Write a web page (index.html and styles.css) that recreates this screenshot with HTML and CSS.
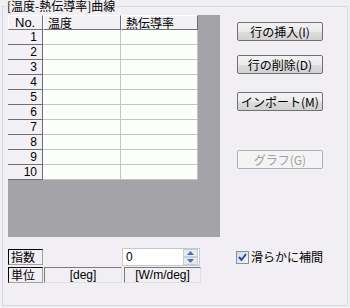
FILE: index.html
```html
<!DOCTYPE html>
<html lang="ja">
<head>
<meta charset="utf-8">
<link rel="stylesheet" href="styles.css">
</head>
<body>
<fieldset class="group">
  <legend class="group-title">[温度-熱伝導率]曲線</legend>
  <div class="content">
    <div class="left">
      <div class="grid-area">
        <div class="table">
          <div class="row head">
            <div class="c rh">No.</div>
            <div class="c c1">温度</div>
            <div class="c c2">熱伝導率</div>
          </div>
          <div class="row"><div class="c rh">1</div><div class="c c1"></div><div class="c c2"></div></div>
          <div class="row"><div class="c rh">2</div><div class="c c1"></div><div class="c c2"></div></div>
          <div class="row"><div class="c rh">3</div><div class="c c1"></div><div class="c c2"></div></div>
          <div class="row"><div class="c rh">4</div><div class="c c1"></div><div class="c c2"></div></div>
          <div class="row"><div class="c rh">5</div><div class="c c1"></div><div class="c c2"></div></div>
          <div class="row"><div class="c rh">6</div><div class="c c1"></div><div class="c c2"></div></div>
          <div class="row"><div class="c rh">7</div><div class="c c1"></div><div class="c c2"></div></div>
          <div class="row"><div class="c rh">8</div><div class="c c1"></div><div class="c c2"></div></div>
          <div class="row"><div class="c rh">9</div><div class="c c1"></div><div class="c c2"></div></div>
          <div class="row"><div class="c rh">10</div><div class="c c1"></div><div class="c c2"></div></div>
        </div>
      </div>
      <div class="foot">
        <div class="frow">
          <div class="flabel">指数</div>
          <div class="fblank"></div>
          <div class="spin">
            <span class="spin-val">0</span>
            <span class="spin-btns">
              <span class="sb"><svg width="7" height="4" viewBox="0 0 7 4"><path d="M3.5 0 L7 4 L0 4 Z" fill="#4a6fb5"/></svg></span>
              <span class="sb"><svg width="7" height="4" viewBox="0 0 7 4"><path d="M0 0 L7 0 L3.5 4 Z" fill="#4a6fb5"/></svg></span>
            </span>
          </div>
        </div>
        <div class="frow">
          <div class="flabel">単位</div>
          <div class="unit u1">[deg]</div>
          <div class="unit u2">[W/m/deg]</div>
        </div>
      </div>
    </div>
    <div class="right">
      <button class="btn b1">行の挿入(I)</button>
      <button class="btn b2">行の削除(D)</button>
      <button class="btn b3">インポート(M)</button>
      <button class="btn b4" disabled>グラフ(G)</button>
      <label class="check">
        <span class="box"><svg width="11" height="11" viewBox="0 0 11 11"><path d="M2 5 L4.5 8 L9 2" fill="none" stroke="#2a4a9a" stroke-width="2"/></svg></span>
        <span class="check-text">滑らかに補間</span>
      </label>
    </div>
  </div>
</fieldset>
</body>
</html>
```

FILE: styles.css
```css
* { box-sizing: border-box; }
html, body { margin: 0; padding: 0; }
body {
  width: 350px;
  height: 308px;
  background: #f1eff3;
  font-family: "Noto Sans CJK JP", "Noto Sans", sans-serif;
  font-size: 12px;
  color: #000;
  overflow: hidden;
}
.group {
  margin: 0 2px 2px 2px;
  padding: 0;
  border: 1px solid #d3dbe3;
  height: 306px;
  min-width: 0;
}
.group-title {
  margin-left: 3px;
  padding: 0 1px;
  line-height: 12px;
  height: 12px;
  font-size: 12px;
}
.content {
  display: flex;
  padding: 3px 0 0 5px;
}
.left {
  width: 212px;
  display: flex;
  flex-direction: column;
}
.grid-area {
  height: 222px;
  background: #a4a3a8;
}
.table {
  width: 190px;
  display: flex;
  flex-direction: column;
}
.row {
  display: flex;
  height: 15px;
}
.c {
  height: 15px;
  line-height: 14px;
  font-size: 12px;
  white-space: nowrap;
}
.rh {
  width: 35px;
  background: #f3f1f5;
  border-right: 1px solid #6f6f6f;
  border-bottom: 1px solid #6f6f6f;
  text-align: right;
  padding-right: 5px;
  font-family: "Liberation Sans", "DejaVu Sans", sans-serif;
  font-size: 12px;
}
.c1 {
  width: 78px;
  background: #fcfffc;
  border-right: 1px solid #c4c4c4;
  border-bottom: 1px solid #c4c4c4;
}
.c2 {
  width: 77px;
  background: #fcfffc;
  border-right: 1px solid #c4c4c4;
  border-bottom: 1px solid #c4c4c4;
}
.head .c {
  background: #f3f1f5;
  border-top: 1px solid #fff;
  border-left: 1px solid #fff;
  border-right: 1px solid #6f6f6f;
  border-bottom: 1px solid #6f6f6f;
  text-align: left;
  padding-left: 4px;
  line-height: 13px;
}
.head .rh { padding-left: 6px; font-size: 13px; }
.foot {
  margin-top: 12px;
  display: flex;
  flex-direction: column;
  gap: 2px;
}
.frow {
  display: flex;
  height: 16px;
}
.flabel {
  width: 35px;
  height: 16px;
  border: 1px solid #000;
  border-right-color: #a0a0a0;
  border-bottom-color: #a0a0a0;
  line-height: 14px;
  padding-left: 2px;
}
.fblank { width: 79px; }
.spin {
  width: 78px;
  height: 18px;
  margin-top: -1px;
  background: #fff;
  border: 1px solid #c7c7c7;
  display: flex;
  align-items: center;
  justify-content: space-between;
  padding-left: 3px;
  font-family: "Liberation Sans", "DejaVu Sans", sans-serif;
}
.spin-val { line-height: 14px; }
.spin-btns {
  display: flex;
  flex-direction: column;
  width: 15px;
  height: 16px;
  margin-right: 1px;
}
.sb {
  flex: 1;
  display: flex;
  align-items: center;
  justify-content: center;
  background: #e6e9ef;
  border: 1px solid #c9ced6;
}
.unit {
  height: 16px;
  border: 1px solid #7a7a7a;
  border-right-color: #e0e0e0;
  border-bottom-color: #e0e0e0;
  text-align: center;
  line-height: 14px;
  margin-left: 1px;
  font-family: "Liberation Sans", "DejaVu Sans", sans-serif;
}
.u1 { width: 78px; }
.u2 { width: 77px; margin-left: 2px; }
.right {
  margin-left: 17px;
  display: flex;
  flex-direction: column;
  align-items: flex-start;
  padding-top: 7px;
}
.btn {
  width: 86px;
  height: 19px;
  padding: 0;
  font-family: inherit;
  font-size: 12px;
  line-height: 15px;
  color: #000;
  border: 1px solid #707070;
  border-radius: 2px;
  background: linear-gradient(#f3f3f3, #ebebeb 50%, #dddddd 51%, #d1d1d1);
}
.b2 { margin-top: 14px; }
.b3 { margin-top: 18px; }
.b4 {
  margin-top: 39px;
  color: #a0a0a0;
  border-color: #adb2b5;
  background: #f4f4f4;
}
.check {
  margin-top: 81px;
  margin-left: -1px;
  display: flex;
  align-items: center;
  gap: 2px;
}
.box {
  width: 13px;
  height: 13px;
  border: 1px solid #8e8f8f;
  background: linear-gradient(135deg, #cfd8ea, #f5f7fb);
  display: flex;
  align-items: center;
  justify-content: center;
}
.check-text { line-height: 14px; }
```
